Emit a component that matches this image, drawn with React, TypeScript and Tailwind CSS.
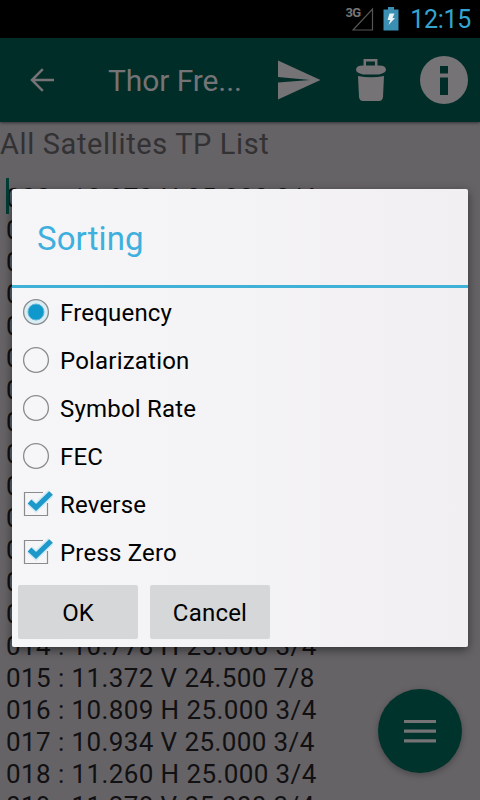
import React, { useState } from 'react';

const transponders = [
  '000 : 10.872 H 25.000 3/4',
  '001 : 12.418 V 28.000 7/8',
  '002 : 12.380 H 28.000 3/4',
  '003 : 12.303 H 28.000 7/8',
  '004 : 12.265 V 28.000 7/8',
  '005 : 12.226 V 28.000 3/4',
  '006 : 12.188 V 28.000 7/8',
  '007 : 12.149 H 28.000 5/6',
  '008 : 12.130 V 30.000 3/4',
  '009 : 11.996 H 28.000 7/8',
  '010 : 11.938 H 25.000 3/4',
  '011 : 11.823 V 28.000 7/8',
  '012 : 11.785 H 30.000 3/4',
  '013 : 11.747 H 28.000 5/6',
  '014 : 10.778 H 25.000 3/4',
  '015 : 11.372 V 24.500 7/8',
  '016 : 10.809 H 25.000 3/4',
  '017 : 10.934 V 25.000 3/4',
  '018 : 11.260 H 25.000 3/4',
  '019 : 11.278 V 25.000 3/4',
];

const sortFields = ['Frequency', 'Polarization', 'Symbol Rate', 'FEC'];

const StatusBar = () => (
  <div className="flex h-[38px] shrink-0 items-center justify-end bg-black pr-[9px]">
    <span className="mr-[-8px] mb-[13px] text-[13px] leading-none font-bold tracking-[-0.8px] text-[#757575]">3G</span>
    <svg width="22" height="24" viewBox="0 0 22 24" className="mr-[9px] mb-px">
      <path d="M1 23 L20.5 2 V23 Z" fill="none" stroke="#555" strokeWidth="1.200" />
    </svg>
    <svg width="16" height="24" viewBox="0 0 16 24" className="mr-[11px] mb-px">
      <path d="M5 0h6v2.500h4.500v21h-15v-21H5z" fill="#3a8fb2" />
      <path d="M6.500 6.500h5l-2 4.500h2.500L5.500 18l1.700-5H4.500z" fill="#e8f4f8" />
    </svg>
    <span className="pt-px text-[25px] leading-none tracking-[-0.3px] text-[#33a5d0]">12:15</span>
  </div>
);

const Toolbar = () => (
  <header className="z-10 flex h-[84px] shrink-0 items-center bg-[#002d27] text-[#757376] shadow-[0_1px_3px_rgba(0,0,0,0.5)]">
    <svg width="26" height="26" viewBox="0 0 26 26" className="ml-[29px]">
      <path d="M25 13H2.800M13.800 2.200 L3 13 L13.800 23.800" fill="none" stroke="currentColor" strokeWidth="2.500" />
    </svg>
    <h1 className="ml-[53px] w-[169px] pt-px text-[30px] leading-none tracking-[-0.1px]">Thor Fre...</h1>
    <svg width="44" height="40" viewBox="0 0 44 40">
      <path d="M1 0.500 L43.500 20 L1 39.500V22.500L33 20L1 17z" fill="currentColor" />
    </svg>
    <svg width="32" height="44" viewBox="0 0 32 44" className="ml-[34px]">
      <path d="M9.800 9V2.300h11.400V9" fill="none" stroke="currentColor" strokeWidth="2.500" />
      <path d="M1 11.800Q1 7.500 8 7.500h16q7 0 7 4.300Q31 15 24 16.500H8Q1 15 1 11.800z" fill="currentColor" />
      <path d="M3 18q13 2.500 26 0l-1 21q-.5 4-4 4H8q-3.500 0-4-4z" fill="currentColor" />
    </svg>
    <svg width="48" height="48" viewBox="0 0 48 48" className="ml-[33px]">
      <circle cx="24" cy="24" r="24" fill="currentColor" />
      <path d="M20 10h8v7.500h-8zM20 21.500h8V39h-8z" fill="#002d27" />
    </svg>
  </header>
);

const RadioIcon = ({ checked }: { checked: boolean }) => (
  <svg width="28" height="28" viewBox="0 0 28 28">
    <circle cx="14" cy="14" r="12.400" fill={checked ? '#d9edf5' : 'none'} stroke="#8b8b8d" strokeWidth="1.300" />
    {checked && <circle cx="14" cy="14" r="8" fill="#0f98cc" stroke="#62b5d8" strokeWidth="1" />}
  </svg>
);

const CheckIcon = ({ checked }: { checked: boolean }) => (
  <svg width="31" height="28" viewBox="0 0 31 28">
    <path d="M21 2.500H2.500v23h23V13" fill="none" stroke="#8b8b8d" strokeWidth="1.200" />
    {checked && (
      <>
        <path d="M7.500 11.500l6.500 6L29 3" fill="none" stroke="#cfeaf5" strokeWidth="8" />
        <path d="M7.500 11.500l6.500 6L29 3" fill="none" stroke="#1c99ca" strokeWidth="5.200" />
      </>
    )}
  </svg>
);

const SortDialog = () => {
  const [field, setField] = useState('Frequency');
  const [reverse, setReverse] = useState(true);
  const [pressZero, setPressZero] = useState(true);

  const options = [
    { label: 'Reverse', checked: reverse, toggle: () => setReverse(!reverse) },
    { label: 'Press Zero', checked: pressZero, toggle: () => setPressZero(!pressZero) },
  ];

  return (
    <div className="absolute top-[189px] left-3 z-20 h-[458px] w-[456px] rounded-[2px] bg-linear-to-r from-[#f6f6f8] to-[#f1eff2] text-black shadow-[0_3px_10px_rgba(0,0,0,0.5)]">
      <h2 className="flex h-[99px] items-center border-b-[3px] border-[#3fb0d6] pt-1 pl-[25px] text-[33px] tracking-[0.1px] text-[#3fb0dd]">
        Sorting
      </h2>
      <div>
        {sortFields.map((name) => (
          <button key={name} onClick={() => setField(name)} className="flex h-12 w-full items-center pl-[10px] text-left text-[24px]">
            <RadioIcon checked={field === name} />
            <span className="ml-[10px] pt-[2px] tracking-[0.2px]">{name}</span>
          </button>
        ))}
        {options.map((option) => (
          <button key={option.label} onClick={option.toggle} className="flex h-12 w-full items-center pl-[10px] text-left text-[24px]">
            <CheckIcon checked={option.checked} />
            <span className="ml-[7px] pt-[2px] tracking-[0.2px]">{option.label}</span>
          </button>
        ))}
      </div>
      <div className="flex gap-3 pt-[9px] pl-[6px] text-[24px]">
        <button className="h-[54px] w-[120px] rounded-[2px] bg-[#d6d7d8] pt-[2px]">OK</button>
        <button className="h-[54px] w-[120px] rounded-[2px] bg-[#d6d7d8] pt-[2px] tracking-[0.2px]">Cancel</button>
      </div>
    </div>
  );
};

const App = () => {
  return (
    <div className="relative flex h-[800px] w-[480px] flex-col overflow-hidden bg-[#656366] font-['Roboto',sans-serif]">
      <StatusBar />
      <Toolbar />
      <h3 className="h-[60px] shrink-0 pt-1 text-[29px] leading-[36px] tracking-[0.63px] text-[#323133]">All Satellites TP List</h3>
      <div className="pl-[6px] text-[26px] leading-8 tracking-[0.4px] whitespace-pre text-[#111012]">
        {transponders.map((row) => (
          <div key={row}>{row}</div>
        ))}
      </div>
      {/* Text cursor */}
      <div className="absolute top-[178px] left-[6px] h-9 w-[3px] bg-[#003d34]" />
      <SortDialog />
      <button className="absolute top-[689px] left-[378px] flex h-[84px] w-[84px] items-center justify-center rounded-full bg-[#00332c] shadow-[0_2px_6px_rgba(0,0,0,0.3)]">
        <svg width="32" height="24" viewBox="0 0 32 24">
          <path d="M0 2.500h32M0 12.200h32M0 21.800h32" stroke="#757376" strokeWidth="3.200" />
        </svg>
      </button>
    </div>
  );
};

export default App;
